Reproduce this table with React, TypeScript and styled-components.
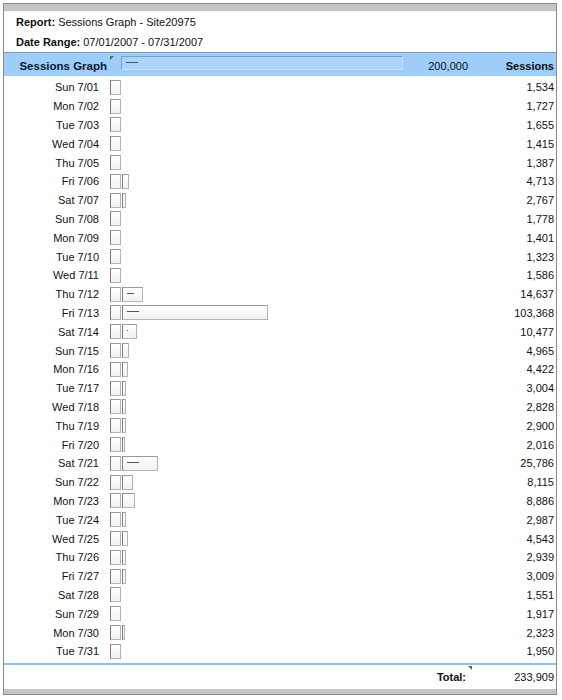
import React from 'react';
import styled, { createGlobalStyle } from 'styled-components';

const SCALE_MAX = 200000;
const SCALE_PX = 282;

const data: [string, number][] = [
  ['Sun 7/01', 1534], ['Mon 7/02', 1727], ['Tue 7/03', 1655], ['Wed 7/04', 1415],
  ['Thu 7/05', 1387], ['Fri 7/06', 4713], ['Sat 7/07', 2767], ['Sun 7/08', 1778],
  ['Mon 7/09', 1401], ['Tue 7/10', 1323], ['Wed 7/11', 1586], ['Thu 7/12', 14637],
  ['Fri 7/13', 103368], ['Sat 7/14', 10477], ['Sun 7/15', 4965], ['Mon 7/16', 4422],
  ['Tue 7/17', 3004], ['Wed 7/18', 2828], ['Thu 7/19', 2900], ['Fri 7/20', 2016],
  ['Sat 7/21', 25786], ['Sun 7/22', 8115], ['Mon 7/23', 8886], ['Tue 7/24', 2987],
  ['Wed 7/25', 4543], ['Thu 7/26', 2939], ['Fri 7/27', 3009], ['Sat 7/28', 1551],
  ['Sun 7/29', 1917], ['Mon 7/30', 2323], ['Tue 7/31', 1950],
];

const GlobalStyle = createGlobalStyle`
  body {
    margin: 0;
    background: #fff;
    font-family: "Liberation Sans", Arial, sans-serif;
    font-size: 11px;
    color: #111;
  }
`;

const Frame = styled.div`
  margin: 3px 0 0 3px;
  width: 552px;
  border: 1px solid #8a8a8a;
`;

const GrayBar = styled.div<{ h: number }>`
  height: ${p => p.h}px;
  background: #c4c4c4;
`;

const Info = styled.div`
  padding: 1px 0 0 12px;
  height: 40px;
`;

const InfoLine = styled.div`
  height: 20px;
  line-height: 20px;
  b { font-weight: bold; }
`;

const Header = styled.div`
  display: flex;
  align-items: center;
  height: 24px;
  padding-top: 3px;
  box-sizing: border-box;
  background: #9ecdfa;
  border-top: 1px solid #7d9cb8;
  font-weight: bold;
`;

const HeaderLabel = styled.div`
  width: 103px;
  text-align: right;
  color: #0c1a30;
  font-size: 11.5px;
`;

const Marker = styled.span`
  display: inline-block;
  width: 0;
  height: 0;
  border-top: 4px solid #2f8a2f;
  border-right: 4px solid transparent;
  align-self: flex-start;
`;

const HeaderMarker = styled(Marker)`
  margin: 0 0 0 3px;
`;

const ScaleBar = styled.div`
  margin-left: 7px;
  width: ${SCALE_PX}px;
  height: 14px;
  box-sizing: border-box;
  border: 1px solid #7f9fbd;
  border-right-color: #c9e3fb;
  border-bottom-color: #c9e3fb;
  background: #a9d4fb;
  position: relative;
  align-self: flex-start;
`;

const Dash = styled.span<{ max: number }>`
  position: absolute;
  left: 4px;
  top: 5px;
  height: 1px;
  width: ${p => Math.max(0, Math.min(12, p.max))}px;
  background: #555;
`;

const ScaleText = styled.div`
  flex: 1;
  text-align: right;
  font-weight: normal;
`;

const ValueCol = styled.div`
  width: 88px;
  text-align: right;
  padding-right: 2px;
  box-sizing: border-box;
`;

const Rows = styled.div`
  padding: 2px 0 2px;
  border-bottom: 2px solid #8ec2ee;
`;

const Row = styled.div`
  display: flex;
  align-items: center;
  height: 18.8px;
`;

const DayLabel = styled.div`
  width: 95px;
  text-align: right;
`;

const Bars = styled.div`
  flex: 1;
  display: flex;
  align-items: center;
  margin-left: 11px;
  gap: 1px;
`;

const Box = styled.div`
  position: relative;
  height: 15px;
  box-sizing: border-box;
  border: 1px solid #b4b4b4;
  border-left-color: #7c7c7c;
  border-top-color: #9a9a9a;
  background: linear-gradient(#ffffff, #f2f2f2);
`;

const CapBox = styled(Box)`
  width: 11px;
`;

const Total = styled.div`
  display: flex;
  align-items: center;
  height: 24px;
`;

const TotalLabel = styled.div`
  flex: 1;
  text-align: right;
  font-weight: bold;
`;

const TotalMarker = styled(Marker)`
  margin: 1px -4px 0 2px;
  transform: scaleX(-1);
`;

const fmt = (n: number) => n.toLocaleString('en-US');

const ValueBar: React.FC<{ value: number }> = ({ value }) => {
  const w = Math.max(2, Math.round((value / SCALE_MAX) * SCALE_PX));
  return (
    <Box style={{ width: w }}>
      {w > 14 && <Dash max={w - 14} />}
    </Box>
  );
};

const App: React.FC = () => {
  const total = data.reduce((s, [, v]) => s + v, 0);
  return (
    <>
      <GlobalStyle />
      <Frame>
        <GrayBar h={7} />
        <Info>
          <InfoLine><b>Report:</b> Sessions Graph - Site20975</InfoLine>
          <InfoLine><b>Date Range:</b> 07/01/2007 - 07/31/2007</InfoLine>
        </Info>
        <Header>
          <HeaderLabel>Sessions Graph</HeaderLabel>
          <HeaderMarker />
          <ScaleBar><Dash max={12} /></ScaleBar>
          <ScaleText>200,000</ScaleText>
          <ValueCol>Sessions</ValueCol>
        </Header>
        <Rows>
          {data.map(([day, v]) => (
            <Row key={day}>
              <DayLabel>{day}</DayLabel>
              <Bars>
                <CapBox />
                {v > 2000 && <ValueBar value={v} />}
              </Bars>
              <ValueCol>{fmt(v)}</ValueCol>
            </Row>
          ))}
        </Rows>
        <Total>
          <TotalLabel>Total:</TotalLabel>
          <TotalMarker />
          <ValueCol>{fmt(total)}</ValueCol>
        </Total>
        <GrayBar h={5} />
      </Frame>
    </>
  );
};

export default App;
